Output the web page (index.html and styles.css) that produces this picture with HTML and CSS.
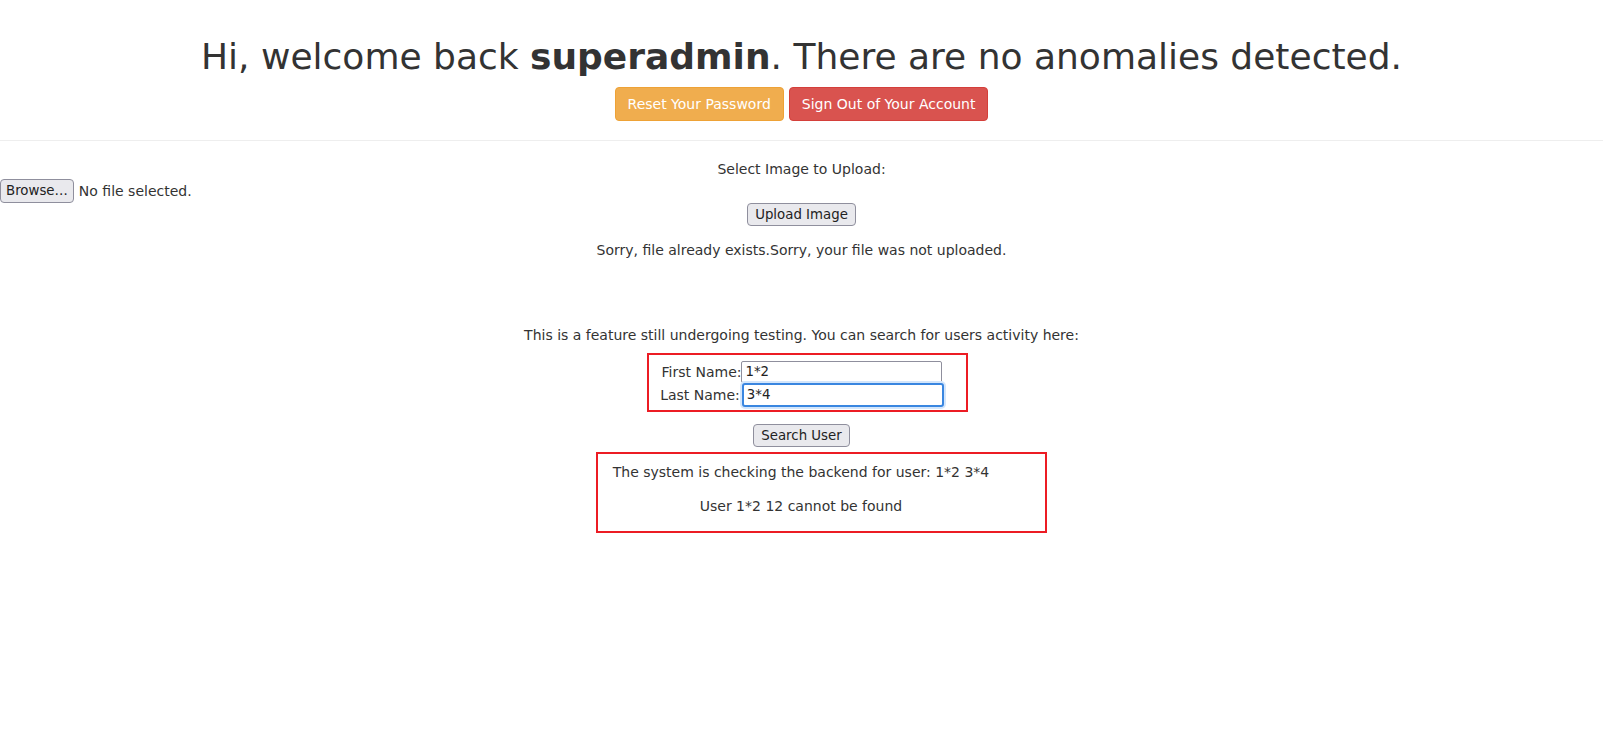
FILE: index.html
```html
<!DOCTYPE html>
<html lang="en">
<head>
<meta charset="utf-8">
<title>Dashboard</title>
<link rel="stylesheet" href="styles.css">
</head>
<body>
<header class="top">
  <h1 class="welcome">Hi, welcome back <b>superadmin</b>. There are no anomalies detected.</h1>
  <div class="actions">
    <button class="btn btn-warning" type="button">Reset Your Password</button>
    <button class="btn btn-danger" type="button">Sign Out of Your Account</button>
  </div>
</header>
<hr class="divider">
<main class="content">
  <form class="upload">
    <p class="upload-label">Select Image to Upload:</p>
    <div class="file-row">
      <button class="native native-file" type="button">Browse…</button>
      <span class="file-status">No file selected.</span>
    </div>
    <div class="center-row">
      <button class="native" type="button">Upload Image</button>
    </div>
  </form>
  <p class="msg msg-sorry">Sorry, file already exists.Sorry, your file was not uploaded.</p>
  <p class="msg msg-testing">This is a feature still undergoing testing. You can search for users activity here:</p>
  <form class="search-box">
    <div class="field-row">
      <label class="field-label">First Name:</label><input class="field" type="text" value="1*2">
    </div>
    <div class="field-row">
      <label class="field-label">Last Name:</label><input class="field field-focus" type="text" value="3*4">
    </div>
  </form>
  <div class="center-row search-row">
    <button class="native" type="button">Search User</button>
  </div>
  <div class="result-box">
    <p class="result-line">The system is checking the backend for user: 1*2 3*4</p>
    <p class="result-line result-second">User 1*2 12 cannot be found</p>
  </div>
</main>
</body>
</html>
```

FILE: styles.css
```css
* { box-sizing: border-box; }

html, body {
  margin: 0;
  padding: 0;
  background: #fff;
}

body {
  font-family: "DejaVu Sans", "Liberation Sans", sans-serif;
  font-size: 14px;
  line-height: 20px;
  color: #333;
}

.top {
  text-align: center;
  padding-top: 37px;
}

.welcome {
  margin: 0 0 10px;
  font-size: 36px;
  font-weight: 500;
  line-height: 1.1;
  color: #333;
}

.welcome b { font-weight: 700; }

.actions {
  display: flex;
  justify-content: center;
  gap: 5px;
}

.btn {
  font-family: "DejaVu Sans", "Liberation Sans", sans-serif;
  font-size: 14px;
  line-height: 20px;
  padding: 6px 12px;
  border: 1px solid transparent;
  border-radius: 4px;
  color: #fff;
  cursor: pointer;
}

.btn-warning { background: #f0ad4e; border-color: #eea236; }
.btn-danger { background: #d9534f; border-color: #d43f3a; }

.divider {
  margin: 19px 0 0;
  border: 0;
  border-top: 1px solid #eee;
  height: 0;
}

.content {
  padding-top: 19px;
  text-align: center;
}

.upload { margin: 0; }

.upload-label {
  margin: 0;
  line-height: 19px;
}

.file-row {
  display: flex;
  align-items: center;
  height: 24px;
  text-align: left;
}

.file-status { margin-left: 5px; }

.native {
  font-family: "DejaVu Sans", "Liberation Sans", sans-serif;
  font-size: 13.333px;
  line-height: 17px;
  padding: 2px 7px;
  background: #e9e9ed;
  color: #222;
  border: 1px solid #8f8f9d;
  border-radius: 4px;
}

.native-file {
  padding: 3px 5px;
  line-height: 16px;
  margin: 0;
}

.center-row {
  display: flex;
  justify-content: center;
  height: 23px;
}

.msg { margin: 0; }

.msg-sorry { margin-top: 14px; }
.msg-testing { margin-top: 65px; }

.search-box {
  width: 321px;
  margin: 8px 0 0 calc(50% - 155px);
  border: 2px solid #ec1c24;
  padding: 6px 10px 3px 0;
}

.field-row {
  display: flex;
  justify-content: center;
  align-items: center;
}

.field-label {
  font-size: 14px;
  line-height: 20px;
}

.field {
  width: 201px;
  height: 22px;
  padding: 0 3px;
  font-family: "DejaVu Sans", "Liberation Sans", sans-serif;
  font-size: 13.333px;
  color: #222;
  border: 1px solid #8f8f9d;
  border-radius: 2px;
  background: #fff;
}

.field-focus {
  width: 202px;
  height: 24px;
  margin-left: 2px;
  border: 2px solid #3a86e0;
  border-radius: 3px;
  box-shadow: 0 0 0 2px #d4e6fb;
  padding: 0 3px;
}

.search-row { margin-top: 12px; }

.result-box {
  width: 451px;
  margin: 5px 0 0 calc(50% - 206px);
  border: 2px solid #ec1c24;
  padding: 8px 40px 15px 0;
}

.result-line { margin: 0; }
.result-second { margin-top: 14px; }
```
